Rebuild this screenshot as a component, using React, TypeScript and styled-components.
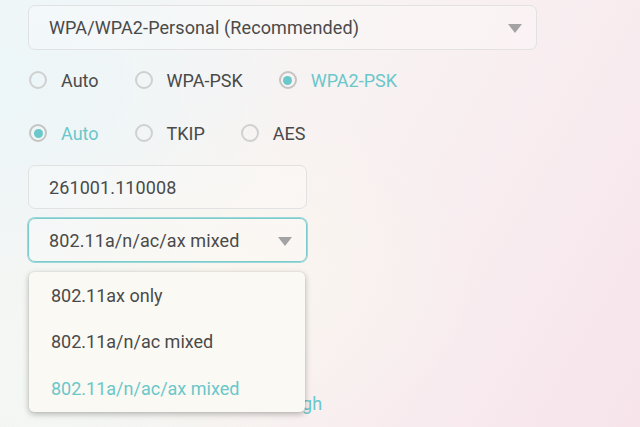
import React from "react";
import styled, { createGlobalStyle } from "styled-components";

const GlobalStyle = createGlobalStyle`
	html, body {
		margin: 0;
		padding: 0;
		width: 640px;
		height: 427px;
		overflow: hidden;
	}
	body {
		font-family: Roboto, "Noto Sans", sans-serif;
		background:
			radial-gradient(ellipse 420px 300px at 0% 20%, rgba(236, 246, 248, 0.95), rgba(236, 246, 248, 0) 70%),
			radial-gradient(ellipse 360px 260px at 10% 90%, rgba(242, 248, 243, 0.8), rgba(242, 248, 243, 0) 70%),
			radial-gradient(ellipse 360px 260px at 35% 65%, rgba(250, 247, 238, 0.9), rgba(250, 247, 238, 0) 70%),
			linear-gradient(120deg, #f2f7f8 0%, #f8f2f2 45%, #f8ebef 75%, #f6e4ea 100%);
	}
`;

const teal = "#6ac7ca";

const Page = styled.div`
	padding: 5px 0 0 28px;
	width: 640px;
	height: 427px;
	box-sizing: border-box;
	display: flex;
	flex-direction: column;
	color: #4a4a4a;
	font-size: 18px;
`;

const Field = styled.div<{ $width: number; $height?: number; $focused?: boolean }>`
	position: relative;
	box-sizing: border-box;
	width: ${(p) => p.$width}px;
	height: ${(p) => p.$height ?? 45}px;
	border: 1px solid ${(p) => (p.$focused ? "#7ccbcd" : "#e2e2e2")};
	box-shadow: ${(p) => (p.$focused ? "0 0 0 1px #9bd8da" : "none")};
	border-radius: 7px;
	background: rgba(255, 255, 255, 0.25);
	display: flex;
	align-items: center;
	justify-content: space-between;
	padding: 0 14px 0 20px;
	letter-spacing: 0.1px;
`;

const Arrow = styled.span`
	width: 0;
	height: 0;
	border-left: 7px solid transparent;
	border-right: 7px solid transparent;
	border-top: 9px solid #a3a3a3;
	margin-top: 2px;
`;

const RadioRow = styled.div<{ $top: number }>`
	display: flex;
	align-items: center;
	height: 20px;
	margin-top: ${(p) => p.$top}px;
	gap: 35px;
`;

const RadioItem = styled.label<{ $checked?: boolean }>`
	display: flex;
	align-items: center;
	gap: 14px;
	color: ${(p) => (p.$checked ? teal : "#4a4a4a")};
	padding-left: 1px;
`;

const RadioDot = styled.span<{ $checked?: boolean }>`
	box-sizing: border-box;
	width: 18px;
	height: 18px;
	border-radius: 50%;
	border: 2px solid ${(p) => (p.$checked ? "#c4c4c4" : "#d0d0d0")};
	display: flex;
	align-items: center;
	justify-content: center;
	&::after {
		content: "";
		width: 9px;
		height: 9px;
		border-radius: 50%;
		background: ${(p) => (p.$checked ? teal : "transparent")};
	}
`;

const Stack = styled.div`
	position: relative;
`;

const Menu = styled.ul`
	position: absolute;
	top: 54px;
	left: 1px;
	width: 276px;
	margin: 0;
	padding: 0;
	list-style: none;
	box-sizing: border-box;
	background: #fbf9f3;
	border-radius: 5px;
	box-shadow: 0 2px 6px rgba(0, 0, 0, 0.28), 0 0 1px rgba(0, 0, 0, 0.2);
	z-index: 2;
`;

const MenuItem = styled.li<{ $active?: boolean }>`
	height: 46px;
	display: flex;
	align-items: center;
	padding-left: 22px;
	color: ${(p) => (p.$active ? teal : "#4a4a4a")};
	&:last-child {
		height: 48px;
	}
`;

type Opt = { label: string; checked?: boolean };

const Radios = ({ options, top }: { options: Opt[]; top: number }) => (
	<RadioRow $top={top}>
		{options.map((o) => (
			<RadioItem key={o.label} $checked={o.checked}>
				<RadioDot $checked={o.checked} />
				{o.label}
			</RadioItem>
		))}
	</RadioRow>
);

const modes = ["802.11ax only", "802.11a/n/ac mixed", "802.11a/n/ac/ax mixed"];

const App = () => {
	return (
		<>
			<GlobalStyle />
			<Page>
				<Field $width={509}>
					WPA/WPA2-Personal (Recommended)
					<Arrow />
				</Field>
				<Radios
					top={20}
					options={[{ label: "Auto" }, { label: "WPA-PSK" }, { label: "WPA2-PSK", checked: true }]}
				/>
				<Radios
					top={33}
					options={[{ label: "Auto", checked: true }, { label: "TKIP" }, { label: "AES" }]}
				/>
				<Field $width={279} $height={44} style={{ marginTop: 22 }}>
					261001.110008
				</Field>
				<Stack style={{ marginTop: 9 }}>
					<Field $width={279} $height={44} $focused>
						802.11a/n/ac/ax mixed
						<Arrow />
					</Field>
					<Menu>
						{modes.map((m, i) => (
							<MenuItem key={m} $active={i === 2}>
								{m}
							</MenuItem>
						))}
					</Menu>
				</Stack>
				<Radios
					top={131}
					options={[{ label: "Low" }, { label: "Middle" }, { label: "High", checked: true }]}
				/>
			</Page>
		</>
	);
};

export default App;
